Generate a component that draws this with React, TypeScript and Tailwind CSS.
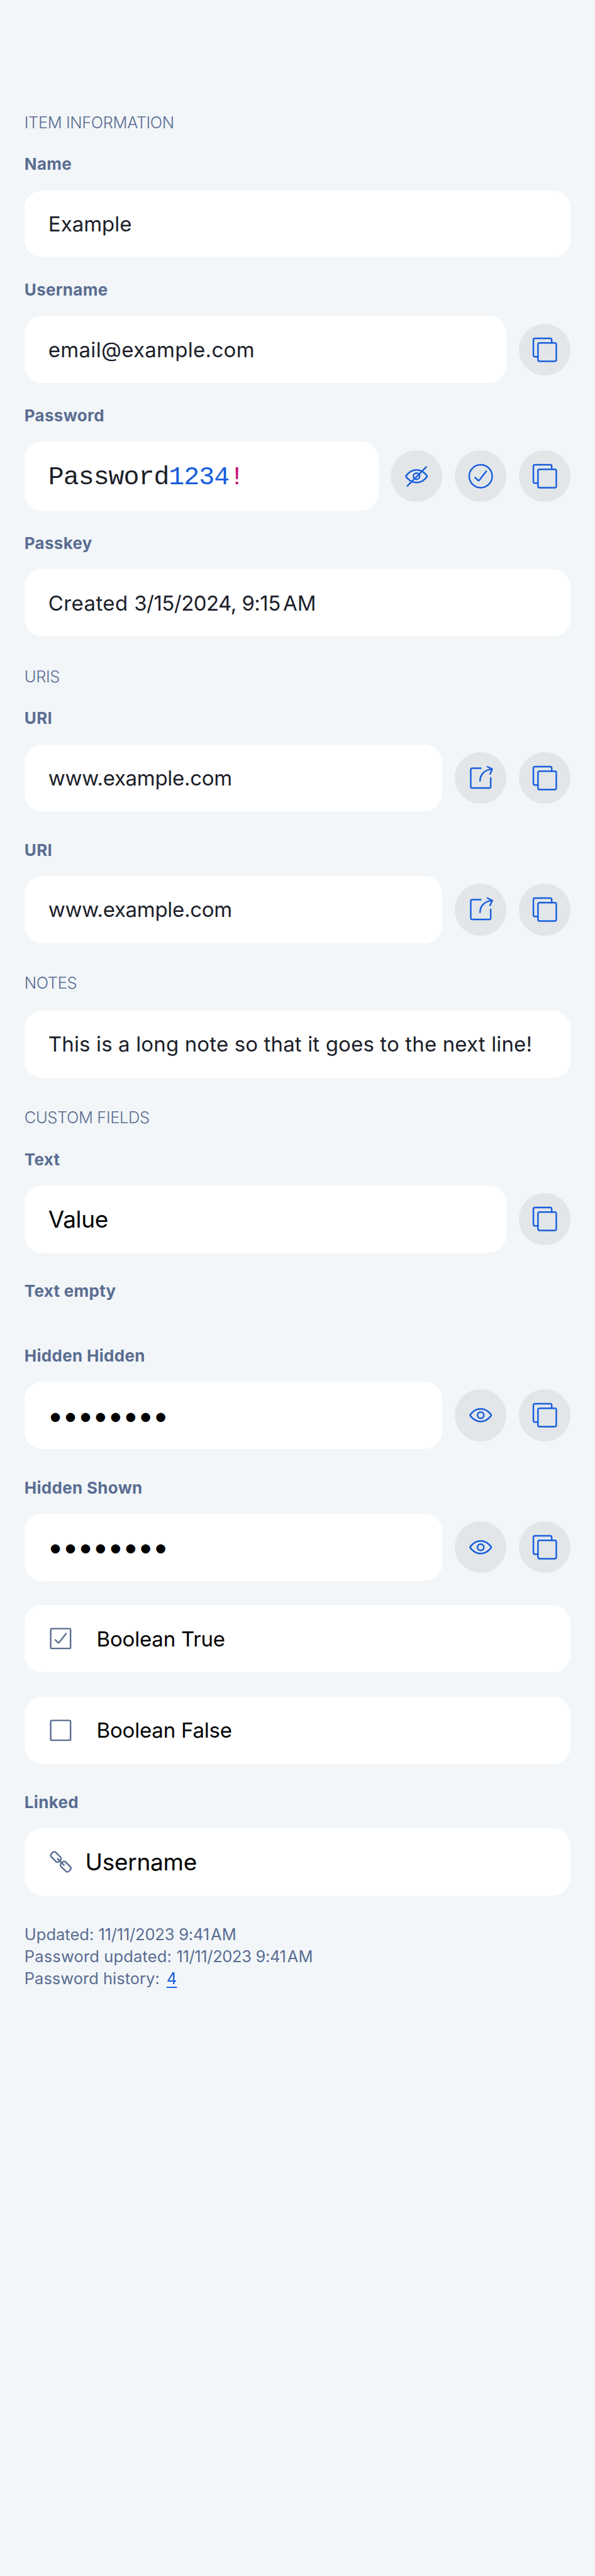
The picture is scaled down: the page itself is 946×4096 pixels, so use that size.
import type { ReactNode } from "react";

function RoundButton({ children, label }: { children: ReactNode; label: string }) {
  return (
    <button
      type="button"
      aria-label={label}
      className="flex size-[82.5px] shrink-0 items-center justify-center rounded-full bg-[#e2e6e9] text-[#175ddc]"
    >
      <svg
        viewBox="0 0 102 102"
        className="size-full"
        fill="none"
        stroke="currentColor"
        strokeWidth="3"
        strokeLinecap="round"
        strokeLinejoin="round"
      >
        {children}
      </svg>
    </button>
  );
}

const EYE =
  "M31 49.3C36.3 42.6 43 38.6 51 38.6S65.7 42.6 71 49.3Q72.4 51 71 52.7C65.7 59.4 59 63.4 51 63.4S36.3 59.4 31 52.7Q29.6 51 31 49.3Z";

function CopyButton() {
  return (
    <RoundButton label="Copy">
      <path d="M37.5 64.5H31.5a3 3 0 0 1-3-3V31.5a3 3 0 0 1 3-3H61.5a3 3 0 0 1 3 3V37.5" />
      <rect x="37.5" y="37.5" width="36" height="36" rx="3" />
    </RoundButton>
  );
}

function ShowButton() {
  return (
    <RoundButton label="Show">
      <path d={EYE} />
      <circle cx="51" cy="51" r="6.2" />
    </RoundButton>
  );
}

function HideButton() {
  return (
    <RoundButton label="Hide">
      <path d={EYE} />
      <circle cx="51" cy="51" r="6.1" />
      <path d="M33 70L70 32.8" />
    </RoundButton>
  );
}

function CheckButton() {
  return (
    <RoundButton label="Check">
      <circle cx="51" cy="51" r="22.6" />
      <path d="M40.2 53.6L46 59.3Q47 60.2 48 59.1L62 41.2" />
    </RoundButton>
  );
}

function LaunchButton() {
  return (
    <RoundButton label="Launch">
      <path d="M51.3 31.5H34.5a3 3 0 0 0-3 3V67.5a3 3 0 0 0 3 3H67.7a3 3 0 0 0 3-3V50.5" />
      <path d="M49.7 56.7C49.7 43.5 59 34.5 73 33.5" />
      <path d="M64.2 28.4L73.8 33.2L69.4 43" />
    </RoundButton>
  );
}

function Heading({ children }: { children: ReactNode }) {
  return (
    <h2 className="text-[25.5px] leading-[30px] font-[350] tracking-[-0.4px] text-[#5a6d91]">{children}</h2>
  );
}

function Label({ children }: { children: ReactNode }) {
  return (
    <div className="h-[54.2px] text-[26px] leading-[25px] font-bold tracking-[0.3px] text-[#5a6d91]">
      {children}
    </div>
  );
}

function Card({ children, tall }: { children: ReactNode; tall?: boolean }) {
  return (
    <div
      className={`flex min-w-0 flex-1 items-center rounded-[28px] bg-white pl-[38px] whitespace-nowrap ${
        tall ? "h-[110px]" : "h-[106.8px]"
      }`}
    >
      {children}
    </div>
  );
}

function Field({
  label,
  children,
  actions,
  tall,
}: {
  label?: string;
  children: ReactNode;
  actions?: ReactNode;
  tall?: boolean;
}) {
  return (
    <div>
      {label && <Label>{label}</Label>}
      <div className="flex items-center gap-[19.4px]">
        <Card tall={tall}>{children}</Card>
        {actions}
      </div>
    </div>
  );
}

function NarrowSpace() {
  return <span className="tracking-[-5px]"> </span>;
}

const body = "text-[33px] leading-[40px] font-[370] text-[#1b2029]";
const option = "pl-[38px] text-[33px] leading-[40px] font-[370] tracking-[-0.2px] text-black";
const system = "text-[37px] leading-[44px] tracking-[-0.3px] text-black";

function Bullets() {
  return (
    <span className="pb-[2px] font-['Lato',sans-serif] text-[39px] leading-[44px] tracking-[1.3px] text-black">
      ••••••••
    </span>
  );
}

function CheckBox({ checked }: { checked?: boolean }) {
  return (
    <svg
      viewBox="0 0 48 48"
      className="size-[38.8px] shrink-0"
      fill="none"
      stroke="#5a6d91"
      strokeWidth="3"
      strokeLinecap="round"
      strokeLinejoin="round"
    >
      <rect x="4.5" y="4.5" width="39" height="39" rx="2.5" />
      {checked && <path d="M13.4 26.6L19 32Q20 32.8 21 31.8L34.7 14.2" />}
    </svg>
  );
}

function LinkIcon() {
  return (
    <svg
      viewBox="0 0 48 48"
      className="size-[38.8px] shrink-0"
      fill="none"
      stroke="#5a6d91"
      strokeWidth="3"
      strokeLinecap="round"
    >
      <rect x="3.95" y="8.25" width="21.5" height="12.5" rx="4" transform="rotate(45 14.7 14.5)" />
      <rect x="23.25" y="27.25" width="21.5" height="12.5" rx="4" transform="rotate(45 34 33.5)" />
      <path d="M18 18L30.6 30.5" />
    </svg>
  );
}

export default function App() {
  return (
    <main className="flex h-[4096px] w-full flex-col bg-[#f2f6f9] px-[38.8px] pt-[179.7px] font-['Inter',sans-serif]">
      <section>
        <Heading>ITEM INFORMATION</Heading>
        <div className="mt-[38.8px] flex flex-col gap-[38.8px]">
          <Field label="Name">
            <span className={body}>Example</span>
          </Field>
          <Field label="Username" actions={<CopyButton />}>
            <span className={`${body} tracking-[0.3px]`}>email@example.com</span>
          </Field>
          <Field
            label="Password"
            tall
            actions={
              <>
                <HideButton />
                <CheckButton />
                <CopyButton />
              </>
            }
          >
            <span className="pt-[3px] font-['Liberation_Mono',monospace] text-[41.5px] leading-[46px] tracking-[-0.96px] text-[#1b2029]">
              Password<span className="text-[#175ddc]">1234</span>
              <span className="text-[#c01176]">!</span>
            </span>
          </Field>
          <Field label="Passkey">
            <span className={body}>
              <span className="tracking-[0.4px]">Created </span>
              <span className="tracking-[-0.55px]">3/15/2024, 9:15</span>
              <NarrowSpace />
              AM
            </span>
          </Field>
        </div>
      </section>

      <section className="mt-[48.5px]">
        <Heading>URIS</Heading>
        <div className="mt-[38.8px] flex flex-col gap-[48.5px]">
          {[0, 1].map((i) => (
            <Field
              key={i}
              label="URI"
              actions={
                <>
                  <LaunchButton />
                  <CopyButton />
                </>
              }
            >
              <span className={`${body} tracking-[-0.3px]`}>www.example.com</span>
            </Field>
          ))}
        </div>
      </section>

      <section className="mt-[48.5px]">
        <Heading>NOTES</Heading>
        <div className="mt-[28.6px]">
          <Field>
            <span className={`${body} tracking-[0.14px]`}>
              This is a long note so that it goes to the next line!
            </span>
          </Field>
        </div>
      </section>

      <section className="mt-[48.5px]">
        <Heading>CUSTOM FIELDS</Heading>
        <div className="mt-[38.8px] flex flex-col gap-[48.5px]">
          <Field label="Text" actions={<CopyButton />}>
            <span className={system}>Value</span>
          </Field>
          <Label>Text empty</Label>
          <Field
            label="Hidden Hidden"
            actions={
              <>
                <ShowButton />
                <CopyButton />
              </>
            }
          >
            <Bullets />
          </Field>
          <Field
            label="Hidden Shown"
            actions={
              <>
                <ShowButton />
                <CopyButton />
              </>
            }
          >
            <Bullets />
          </Field>
        </div>
        <div className="mt-[38.8px] flex flex-col gap-[38.8px]">
          <Field>
            <CheckBox checked />
            <span className={option}>Boolean True</span>
          </Field>
          <Field>
            <CheckBox />
            <span className={option}>Boolean False</span>
          </Field>
        </div>
        <div className="mt-[48.5px]">
          <Field label="Linked">
            <LinkIcon />
            <span className={`${system} pl-[20px]`}>Username</span>
          </Field>
        </div>
      </section>

      <footer className="mt-[43.5px] text-[25.5px] leading-[35.1px] font-[370] text-[#5a6d91]">
        <p>
          Updated: <span className="tracking-[-0.2px]">11/11/2023 9:41</span>
          <NarrowSpace />
          AM
        </p>
        <p>
          <span className="tracking-[0.15px]">Password updated: </span>
          <span className="tracking-[-0.35px]">11/11/2023 9:41</span>
          <NarrowSpace />
          AM
        </p>
        <p>
          Password history:
          <a className="ml-[11px] text-[#175ddc] underline decoration-[1.5px] underline-offset-[4px]">4</a>
        </p>
      </footer>
    </main>
  );
}
